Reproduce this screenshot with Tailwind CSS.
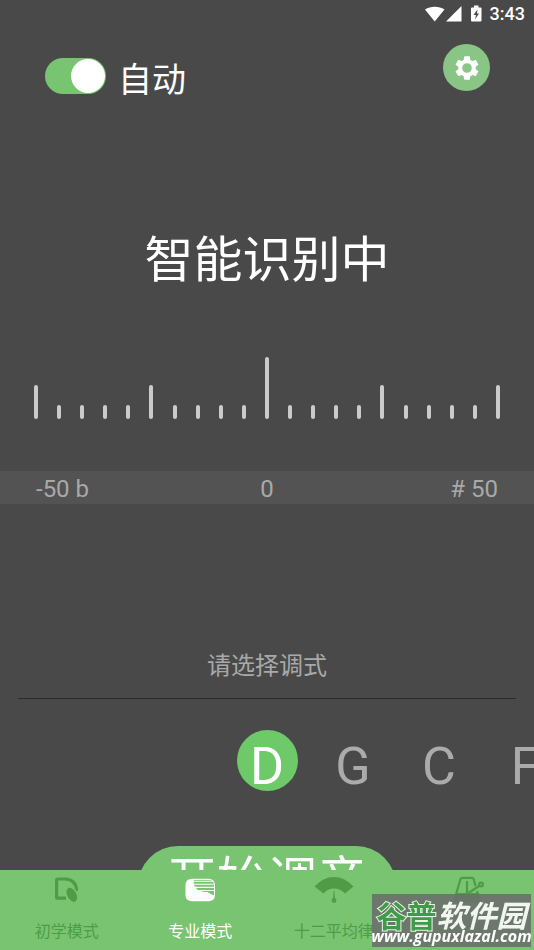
<!DOCTYPE html>
<html lang="zh-CN">
<head>
<meta charset="utf-8">
<meta name="viewport" content="width=device-width, initial-scale=1">
<title>调音器</title>
<script src="https://cdn.jsdelivr.net/npm/@tailwindcss/browser@4"></script>
</head>
<body class="flex h-screen flex-col overflow-hidden bg-[#494949] font-[Roboto,'Noto_Sans_CJK_SC',sans-serif] text-white">
  <div class="flex h-7 shrink-0 items-center justify-end pr-[9px]">
    <svg class="h-4 w-5" viewBox="0 0 20 16" fill="#fff"><path d="M0 3.6C5.600-.2 14-.2 19.500 3.600L9.700 15.500Z"/></svg>
    <svg class="ml-px h-4 w-4" viewBox="0 0 16 16" fill="#fff"><path d="M0 15.500 15.500 0V15.500Z"/></svg>
    <svg class="ml-[9px] h-[18px] w-3" viewBox="0 0 12 18"><path fill="#fff" d="M1 2.500H3V.5H7.500V2.500H9.500Q10.500 2.500 10.500 3.500V15.500Q10.500 16.500 9.500 16.500H1Q0 16.500 0 15.500V3.500Q0 2.500 1 2.500Z"/><path fill="#494949" d="M6.500 4.500 2.500 10H5L4 14.500 8 8.500H6Z"/></svg>
    <time class="ml-[7px] text-[18px] leading-7 font-medium">3:43</time>
  </div>

  <header class="flex h-24 shrink-0 items-start justify-between pt-4 pr-11 pl-[45px]">
    <label class="flex h-16 items-center gap-3 text-[34px] leading-[50px]">
      <input type="checkbox" role="switch" checked class="h-9 w-[61px] appearance-none rounded-full bg-[#78c471] p-px before:block before:size-[34px] before:rounded-full before:bg-white checked:before:ml-[25px]">
      <span class="pt-2">自动</span>
    </label>
    <button aria-label="设置" class="flex size-[47px] items-center justify-center rounded-full bg-[#89c585]">
      <svg class="size-7" viewBox="0 0 24 24" fill="#fff"><path d="M19.430 12.980c.04-.32.07-.64.07-.98s-.03-.66-.07-.98l2.110-1.650c.19-.15.24-.42.12-.64l-2-3.460c-.12-.22-.39-.3-.61-.22l-2.490 1c-.52-.4-1.080-.73-1.690-.98l-.38-2.650A.49.490 0 0 0 14 2h-4c-.25 0-.46.180-.49.420l-.38 2.650c-.61.250-1.170.590-1.690.98l-2.490-1c-.23-.09-.49 0-.61.220l-2 3.460c-.13.220-.07.490.12.640l2.110 1.650c-.04.320-.07.650-.07.980s.03.660.07.980l-2.110 1.650c-.19.150-.24.420-.12.640l2 3.460c.12.220.39.300.61.220l2.490-1c.52.400 1.080.730 1.690.980l.38 2.650c.03.240.24.420.49.420h4c.25 0 .46-.18.490-.42l.38-2.650c.61-.25 1.170-.59 1.690-.98l2.490 1c.23.090.49 0 .61-.22l2-3.460c.12-.22.070-.49-.12-.64l-2.110-1.650zM12 16.100a4.100 4.100 0 1 1 0-8.200 4.100 4.100 0 0 1 0 8.200z"/></svg>
    </button>
  </header>

  <main class="flex min-h-0 flex-1 flex-col overflow-hidden">
    <h1 class="mt-[101px] shrink-0 text-center text-[49px] leading-[72px]">智能识别中</h1>

    <div class="mt-[61px] flex h-[61px] shrink-0 items-end justify-between px-[34px]" aria-hidden="true">
      <i class="h-[34px] w-1 rounded-xs bg-[#cbcbcb]"></i><i class="h-[14px] w-1 rounded-xs bg-[#cbcbcb]"></i><i class="h-[14px] w-1 rounded-xs bg-[#cbcbcb]"></i><i class="h-[14px] w-1 rounded-xs bg-[#cbcbcb]"></i><i class="h-[14px] w-1 rounded-xs bg-[#cbcbcb]"></i>
      <i class="h-[34px] w-1 rounded-xs bg-[#cbcbcb]"></i><i class="h-[14px] w-1 rounded-xs bg-[#cbcbcb]"></i><i class="h-[14px] w-1 rounded-xs bg-[#cbcbcb]"></i><i class="h-[14px] w-1 rounded-xs bg-[#cbcbcb]"></i><i class="h-[14px] w-1 rounded-xs bg-[#cbcbcb]"></i>
      <i class="h-[62px] w-1 rounded-xs bg-[#cbcbcb]"></i><i class="h-[14px] w-1 rounded-xs bg-[#cbcbcb]"></i><i class="h-[14px] w-1 rounded-xs bg-[#cbcbcb]"></i><i class="h-[14px] w-1 rounded-xs bg-[#cbcbcb]"></i><i class="h-[14px] w-1 rounded-xs bg-[#cbcbcb]"></i>
      <i class="h-[34px] w-1 rounded-xs bg-[#cbcbcb]"></i><i class="h-[14px] w-1 rounded-xs bg-[#cbcbcb]"></i><i class="h-[14px] w-1 rounded-xs bg-[#cbcbcb]"></i><i class="h-[14px] w-1 rounded-xs bg-[#cbcbcb]"></i><i class="h-[14px] w-1 rounded-xs bg-[#cbcbcb]"></i>
      <i class="h-[34px] w-1 rounded-xs bg-[#cbcbcb]"></i>
    </div>

    <div class="mt-[52px] grid h-[33px] shrink-0 grid-cols-3 bg-[#535353] px-9 pt-[2px] text-[24px] leading-[33px] text-[#a9a9a9]">
      <span>-50 b</span><span class="text-center">0</span><span class="text-right"># 50</span>
    </div>

    <section class="mt-[144px] shrink-0">
      <h2 class="mx-[18px] h-[51px] border-b-1 border-[#2c2c2c] text-center text-[24px] leading-9 text-[#a9a9a9]">请选择调式</h2>
      <div class="mt-[31px] flex overflow-hidden pl-[calc(50%-43px)] text-[52px] leading-[60px] text-[#ababab]">
        <button class="flex w-[86px] shrink-0 justify-center text-white"><span class="size-[61px] rounded-full bg-[#6eca68] pt-[7px]">D</span></button>
        <button class="w-[86px] shrink-0 pt-[7px]">G</button>
        <button class="w-[86px] shrink-0 pt-[7px]">C</button>
        <button class="w-[86px] shrink-0 pt-[7px]">F</button>
      </div>
    </section>

    <button class="mx-auto mt-[49px] h-20 w-[258px] shrink-0 rounded-full bg-[#78c471] text-[50px] leading-[70px]"><span class="block h-20">开始调音</span></button>
  </main>

  <nav class="grid h-20 shrink-0 grid-cols-4 bg-[#78c471] text-[16px] leading-6 text-[#4f9c47]">
    <a href="#" class="flex flex-col items-center gap-4 pt-[6px]">
      <svg class="h-7 w-10" viewBox="0 0 40 28"><path d="M19 22.200H10.600Q9.600 22.200 9.600 21.200V4.200Q9.600 3 10.800 3H18Q29.500 3.500 29.500 15" fill="none" stroke="#4f9c47" stroke-width="3.200"/><ellipse cx="24.800" cy="18.800" rx="5.200" ry="8.300" transform="rotate(-27 24.800 18.800)" fill="#4f9c47" stroke="#78c471" stroke-width="1.400"/></svg>
      <span>初学模式</span>
    </a>
    <a href="#" aria-current="page" class="flex flex-col items-center gap-4 pt-[6px] text-white">
      <svg class="h-7 w-10" viewBox="0 0 40 28"><rect x="5.500" y="2.800" width="29.500" height="22.400" rx="6" fill="#fff"/><path d="M13.500 4H29Q34 4 34 9V19.500Q30 18 27 15.800Q25 16.500 21 15.300Q13 13 13.500 4Z" fill="#78c471"/><path d="M13 5.200H33M13 8.300H34M15 11.400H34M19 14.500H34" stroke="#fff" stroke-width="1.100"/></svg>
      <span>专业模式</span>
    </a>
    <a href="#" class="flex flex-col items-center gap-4 pt-[6px]">
      <svg class="h-7 w-10" viewBox="0 0 40 28" fill="#4f9c47"><path d="M.5 10.500Q9 1 20 1T39.500 10.500L31 17.500Q26 12.500 20 12.500T9.500 17.500Z"/><path d="M19.700 14.500H20.300L21 23H19Z"/><circle cx="20" cy="24.500" r="2.400"/></svg>
      <span class="whitespace-nowrap">十二平均律</span>
    </a>
    <a href="#" class="flex flex-col items-center gap-4 pt-[6px]">
      <svg class="h-7 w-10" viewBox="0 0 40 28" fill="none" stroke="#4f9c47" stroke-width="2.200"><path d="M28.500 10 26.700 3Q26.300 1.800 25 1.800H15.500Q14 1.800 13.500 3L7 25.500H33L30 15"/><path d="M20 5V18L32 10"/><circle cx="34" cy="8.500" r="1.900"/><path d="M10 18H31V25H8Z" fill="#4f9c47"/></svg>
      <span>节拍器</span>
    </a>
  </nav>

  <div class="pointer-events-none fixed right-[3px] bottom-[3px] flex h-[53px] w-[159px] flex-col items-center bg-[#6b706b]/90">
    <div class="mt-[3px] font-['Noto_Sans_CJK_SC',sans-serif] text-[30px] leading-[34px] font-bold whitespace-nowrap text-[#f1f7ef]"><span class="text-[#3f9b48] [-webkit-text-stroke:2px_#e8f3e6] [paint-order:stroke_fill]">谷普</span><span class="italic">软件园</span></div>
    <div class="-mt-[3px] font-['Open_Sans',sans-serif] text-[16px] leading-4 font-bold text-white italic">www.gupuxlazal.com</div>
  </div>
</body>
</html>
